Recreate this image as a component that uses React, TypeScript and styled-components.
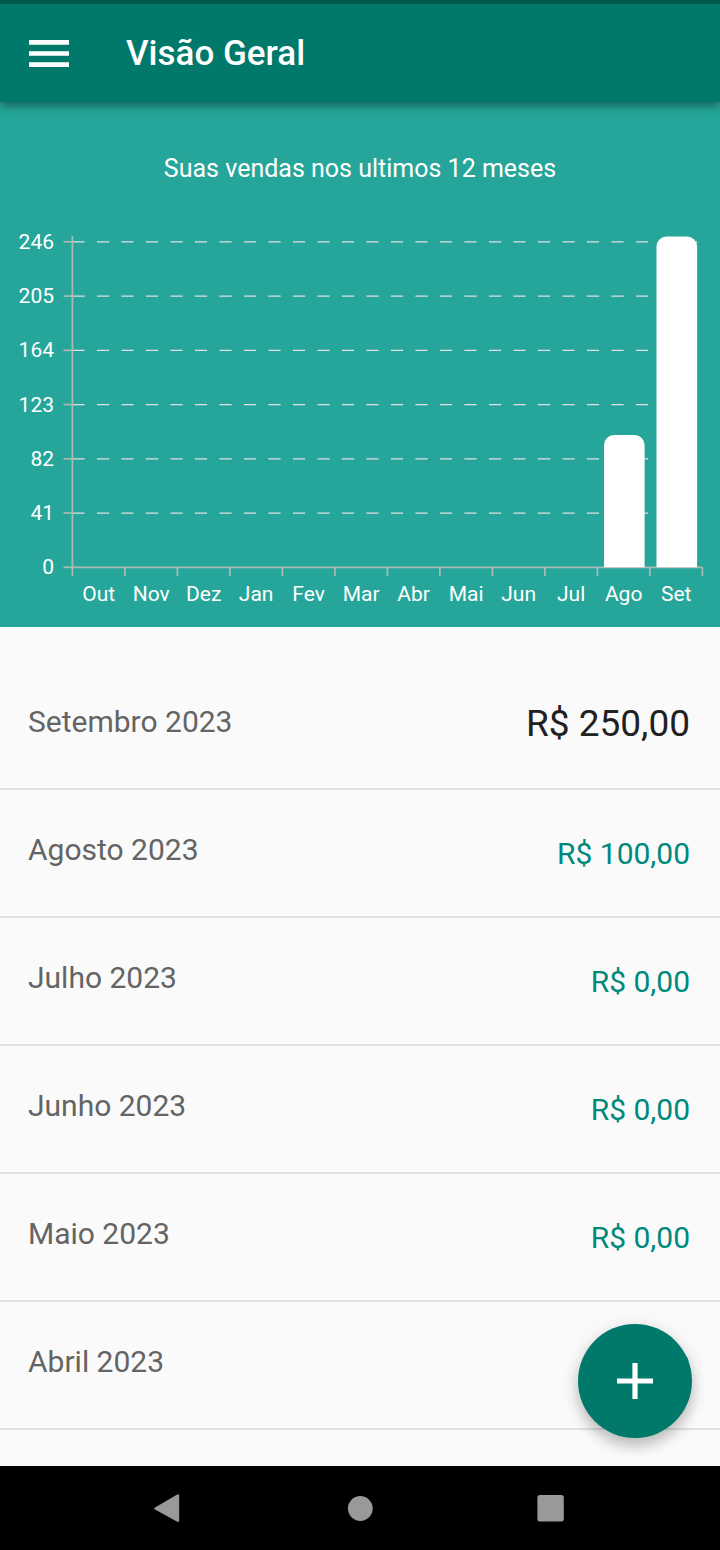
import React from "react";
import styled, { createGlobalStyle } from "styled-components";

const GlobalStyle = createGlobalStyle`
  *, *::before, *::after { box-sizing: border-box; }
  body {
    margin: 0;
    background: #fafafa;
    font-family: Roboto, "Liberation Sans", sans-serif;
  }
  button {
    padding: 0;
    border: 0;
    background: none;
    cursor: pointer;
  }
  svg { display: block; }
`;

const Screen = styled.div`
  display: flex;
  flex-direction: column;
  height: 100vh;
`;

const AppBar = styled.header`
  position: relative;
  z-index: 1;
  flex: none;
  display: flex;
  align-items: flex-start;
  gap: 44px;
  padding: 16px;
  height: 102px;
  border-top: 4px solid #00594f;
  background: #00796b;
  box-shadow: 0 4px 9px rgba(0, 0, 0, 0.4);
`;

const MenuButton = styled.button`
  display: grid;
  place-items: center;
  width: 66px;
  height: 66px;
`;

const Title = styled.h1`
  margin: 0;
  color: #fff;
  font-size: 35px;
  line-height: 68px;
  font-weight: 500;
`;

const Body = styled.div`
  position: relative;
  flex: 1;
  min-height: 0;
`;

const Content = styled.main`
  height: 100%;
  overflow: hidden auto;
  scrollbar-width: none;
`;

const ChartPanel = styled.section`
  padding: 49px 0 15px;
  background: #26a69a;
`;

const ChartTitle = styled.h2`
  margin: 0;
  color: #fff;
  font-size: 25px;
  line-height: 36px;
  font-weight: 400;
  text-align: center;
`;

const Chart = styled.svg`
  width: 100%;
  height: auto;
  text {
    fill: #fff;
    font-size: 21px;
  }
`;

const MonthList = styled.ul`
  margin: 0;
  padding: 35px 0 0;
  list-style: none;
`;

const MonthRow = styled.li`
  display: flex;
  align-items: center;
  justify-content: space-between;
  height: 128px;
  padding: 0 30px 6px 28px;
  border-bottom: 2px solid #e0e0e0;
`;

const MonthName = styled.span`
  color: #646464;
  font-size: 30px;
  line-height: 36px;
`;

const Amount = styled.span<{ $current?: boolean }>`
  padding-top: ${(p) => (p.$current ? 4 : 8)}px;
  color: ${(p) => (p.$current ? "#212121" : "#00897b")};
  font-size: ${(p) => (p.$current ? 37 : 30)}px;
  line-height: 36px;
`;

const AddButton = styled.button`
  position: absolute;
  right: 28px;
  bottom: 28px;
  display: grid;
  place-items: center;
  width: 114px;
  height: 114px;
  border-radius: 50%;
  background: #00796b;
  box-shadow: 0 8px 14px rgba(0, 0, 0, 0.22), 0 2px 20px rgba(0, 0, 0, 0.08);
`;

const SystemBar = styled.nav`
  flex: none;
  display: grid;
  grid-template-columns: repeat(3, 1fr);
  height: 84px;
  padding: 0 10%;
  background: #000;
`;

const SystemButton = styled.button`
  display: grid;
  place-items: center;
`;

const sales = [
  { label: "Out", value: 0 },
  { label: "Nov", value: 0 },
  { label: "Dez", value: 0 },
  { label: "Jan", value: 0 },
  { label: "Fev", value: 0 },
  { label: "Mar", value: 0 },
  { label: "Abr", value: 0 },
  { label: "Mai", value: 0 },
  { label: "Jun", value: 0 },
  { label: "Jul", value: 0 },
  { label: "Ago", value: 100 },
  { label: "Set", value: 250 },
];

const scale = [0, 41, 82, 123, 164, 205, 246];

const months = [
  { name: "Setembro 2023", amount: "R$ 250,00" },
  { name: "Agosto 2023", amount: "R$ 100,00" },
  { name: "Julho 2023", amount: "R$ 0,00" },
  { name: "Junho 2023", amount: "R$ 0,00" },
  { name: "Maio 2023", amount: "R$ 0,00" },
  { name: "Abril 2023", amount: "R$ 0,00" },
];

const LEFT = 72.4;
const RIGHT = 702.4;
const BASE = 380.3;
const STEP = (RIGHT - LEFT) / sales.length;
const AXIS = "#a9bab4";
const yOf = (value: number) => BASE - value * 1.323;

function barPath(x: number, top: number, width: number, r: number) {
  return `M${x} ${BASE}V${top + r}a${r} ${r} 0 0 1 ${r} ${-r}h${width - 2 * r}a${r} ${r} 0 0 1 ${r} ${r}V${BASE}Z`;
}

function SalesChart() {
  return (
    <Chart viewBox="0 0 720 425" role="img" aria-label="Vendas por mês">
      {scale.map((v) => (
        <g key={v}>
          {v > 0 && (
            <path
              d={`M${LEFT} ${yOf(v)}H${RIGHT}`}
              stroke="#e0e0e0"
              strokeWidth="1.2"
              strokeDasharray="12.25 12.25"
            />
          )}
          <path d={`M63.5 ${yOf(v)}H${LEFT}`} stroke={AXIS} strokeWidth="1.75" />
          <text x="54" y={yOf(v) + 7} textAnchor="end">
            {v}
          </text>
        </g>
      ))}
      <path d={`M${LEFT} 49V${BASE}H${RIGHT}`} fill="none" stroke={AXIS} strokeWidth="1.75" />
      {[...sales, null].map((_, i) => (
        <path
          key={i}
          d={`M${LEFT + i * STEP} ${BASE}v9`}
          stroke={AXIS}
          strokeWidth="1.75"
        />
      ))}
      {sales.map((s, i) => (
        <g key={s.label}>
          {s.value > 0 && (
            <path d={barPath(LEFT + i * STEP + 6.6, yOf(s.value), 40.6, 10)} fill="#fff" />
          )}
          <text x={LEFT + (i + 0.5) * STEP} y="414" textAnchor="middle">
            {s.label}
          </text>
        </g>
      ))}
    </Chart>
  );
}

export default function App() {
  return (
    <>
      <GlobalStyle />
      <Screen>
        <AppBar>
          <MenuButton type="button" aria-label="Menu">
            <svg width="40" height="27" viewBox="0 0 40 27" fill="#fff">
              <path d="M0 0h40v4.7H0zM0 11.2h40v4.6H0zM0 22.3h40V27H0z" />
            </svg>
          </MenuButton>
          <Title>Visão Geral</Title>
        </AppBar>
        <Body>
          <Content>
            <ChartPanel>
              <ChartTitle>Suas vendas nos ultimos 12 meses</ChartTitle>
              <SalesChart />
            </ChartPanel>
            <MonthList>
              {months.map((m, i) => (
                <MonthRow key={m.name}>
                  <MonthName>{m.name}</MonthName>
                  <Amount $current={i === 0}>{m.amount}</Amount>
                </MonthRow>
              ))}
            </MonthList>
          </Content>
          <AddButton type="button" aria-label="Adicionar">
            <svg width="36" height="36" viewBox="0 0 36 36" fill="#fff">
              <path d="M15.4 0h5.2v15.4H36v5.2H20.6V36h-5.2V20.6H0v-5.2h15.4z" />
            </svg>
          </AddButton>
        </Body>
        <SystemBar aria-label="Navegação do sistema">
          <SystemButton type="button" aria-label="Voltar">
            <svg width="28" height="30" viewBox="0 0 28 30" fill="#999">
              <path d="M1 14.6 22.8 1.7Q25.2 .5 25.2 3V27Q25.2 29.7 22.8 28.6L1 16.4Q-.2 15.5 1 14.6Z" />
            </svg>
          </SystemButton>
          <SystemButton type="button" aria-label="Início">
            <svg width="26" height="26" viewBox="0 0 26 26" fill="#999">
              <circle cx="13.3" cy="13.5" r="12.4" />
            </svg>
          </SystemButton>
          <SystemButton type="button" aria-label="Recentes">
            <svg width="30" height="28" viewBox="0 0 30 28" fill="#999">
              <rect x="0.4" y="1" width="26.4" height="26.4" rx="2.5" />
            </svg>
          </SystemButton>
        </SystemBar>
      </Screen>
    </>
  );
}
